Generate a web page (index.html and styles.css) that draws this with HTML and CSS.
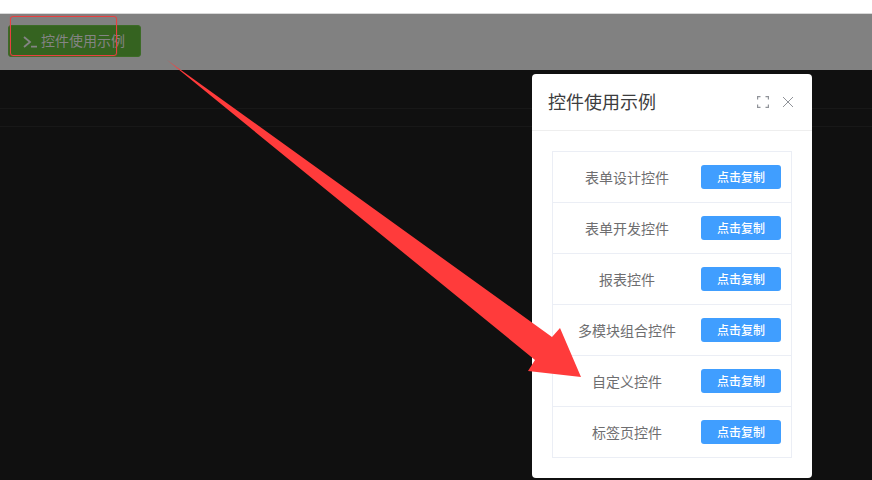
FILE: index.html
```html
<!DOCTYPE html>
<html lang="zh">
<head>
<meta charset="utf-8">
<title>控件使用示例</title>
<link rel="stylesheet" href="styles.css">
</head>
<body>
<div class="topbar"></div>
<div class="toolbar">
  <button class="run-btn">
    <svg class="run-icon" width="14" height="12" viewBox="0 0 14 12"><path d="M1 1l6 5-6 5M8 10.700h6" fill="none" stroke="currentColor" stroke-width="1.800"/></svg>
    <span>控件使用示例</span>
  </button>
</div>
<div class="backdrop">
  <div class="rule"></div>
  <div class="rule"></div>
</div>
<section class="modal">
  <header class="modal-head">
    <h2 class="modal-title">控件使用示例</h2>
    <svg class="head-icon" width="12" height="12" viewBox="0 0 12 12"><path d="M.6 3.500V.6h2.900M8.500 .6h2.900v2.900M11.400 8.500v2.900H8.500M3.500 11.400H.6V8.500" fill="none" stroke="#909399" stroke-width="1.200"/></svg>
    <svg class="head-icon" width="10" height="10" viewBox="0 0 10 10"><path d="M0 0l10 10M10 0L0 10" fill="none" stroke="#909399" stroke-width="1"/></svg>
  </header>
  <div class="modal-body">
    <div class="list">
      <div class="row"><span class="row-name">表单设计控件</span><button class="copy">点击复制</button></div>
      <div class="row"><span class="row-name">表单开发控件</span><button class="copy">点击复制</button></div>
      <div class="row"><span class="row-name">报表控件</span><button class="copy">点击复制</button></div>
      <div class="row"><span class="row-name">多模块组合控件</span><button class="copy">点击复制</button></div>
      <div class="row"><span class="row-name">自定义控件</span><button class="copy">点击复制</button></div>
      <div class="row"><span class="row-name">标签页控件</span><button class="copy">点击复制</button></div>
    </div>
  </div>
</section>
<div class="mark-box"></div>
<svg class="mark-arrow" width="872" height="480" viewBox="0 0 872 480"><polygon points="167,60 552,337 560,328 581,377 528,371 535,360" fill="#ff3b3b"/></svg>
</body>
</html>
```

FILE: styles.css
```css
* { box-sizing: border-box; }
html, body { margin: 0; height: 100%; }
body {
  width: 872px;
  height: 480px;
  overflow: hidden;
  position: relative;
  display: flex;
  flex-direction: column;
  background: #101010;
  font-family: "Noto Sans CJK SC", "Liberation Sans", sans-serif;
}
.topbar { height: 14px; background: #fff; border-bottom: 1px solid #d8d8d8; flex: none; }
.toolbar {
  height: 56px;
  flex: none;
  background: #818181;
  padding: 11px 8px 0;
}
.run-btn {
  width: 133px;
  height: 32px;
  display: flex;
  align-items: center;
  gap: 4px;
  padding: 0 0 2px 14px;
  background: #356320;
  border: 1px solid #3c6b27;
  border-radius: 3px;
  color: #848484;
  font: 14px "Noto Sans CJK SC", sans-serif;
}
.run-icon { flex: none; margin-top: 3px; }
.backdrop { flex: 1; padding-top: 38px; }
.rule { height: 1px; background: #181818; margin-bottom: 17px; }
.modal {
  position: absolute;
  left: 532px;
  top: 74px;
  width: 280px;
  height: 404px;
  background: #fff;
  border-radius: 4px;
}
.modal-head {
  height: 57px;
  display: flex;
  align-items: center;
  gap: 14px;
  padding: 0 19px 0 16px;
  border-bottom: 1px solid #eeeeee;
}
.modal-title {
  flex: 1;
  margin: 0 0 2px;
  font-size: 18px;
  font-weight: 400;
  color: #3c3c3e;
}
.modal-head .head-icon { margin-bottom: 0; }
.modal-body { padding: 20px; }
.list { border: 1px solid #ebeef5; border-bottom: 0; }
.row {
  height: 51px;
  display: flex;
  align-items: center;
  padding: 0 10px 0 0;
  border-bottom: 1px solid #ebeef5;
}
.row-name {
  flex: 1;
  text-align: center;
  font-size: 14px;
  color: #6e6e70;
  line-height: 20px;
}
.copy {
  width: 80px;
  height: 24px;
  padding: 0 0 2px;
  border: 0;
  border-radius: 3px;
  background: #409eff;
  color: #fff;
  font: 500 12px "Noto Sans CJK SC", sans-serif;
}
.mark-box {
  position: absolute;
  left: 10px;
  top: 16px;
  width: 107px;
  height: 40px;
  border: 1px solid #e84040;
  border-radius: 3px;
  box-shadow: 0 0 1px #e84040;
}
.mark-arrow { position: absolute; left: 0; top: 0; pointer-events: none; }
```
